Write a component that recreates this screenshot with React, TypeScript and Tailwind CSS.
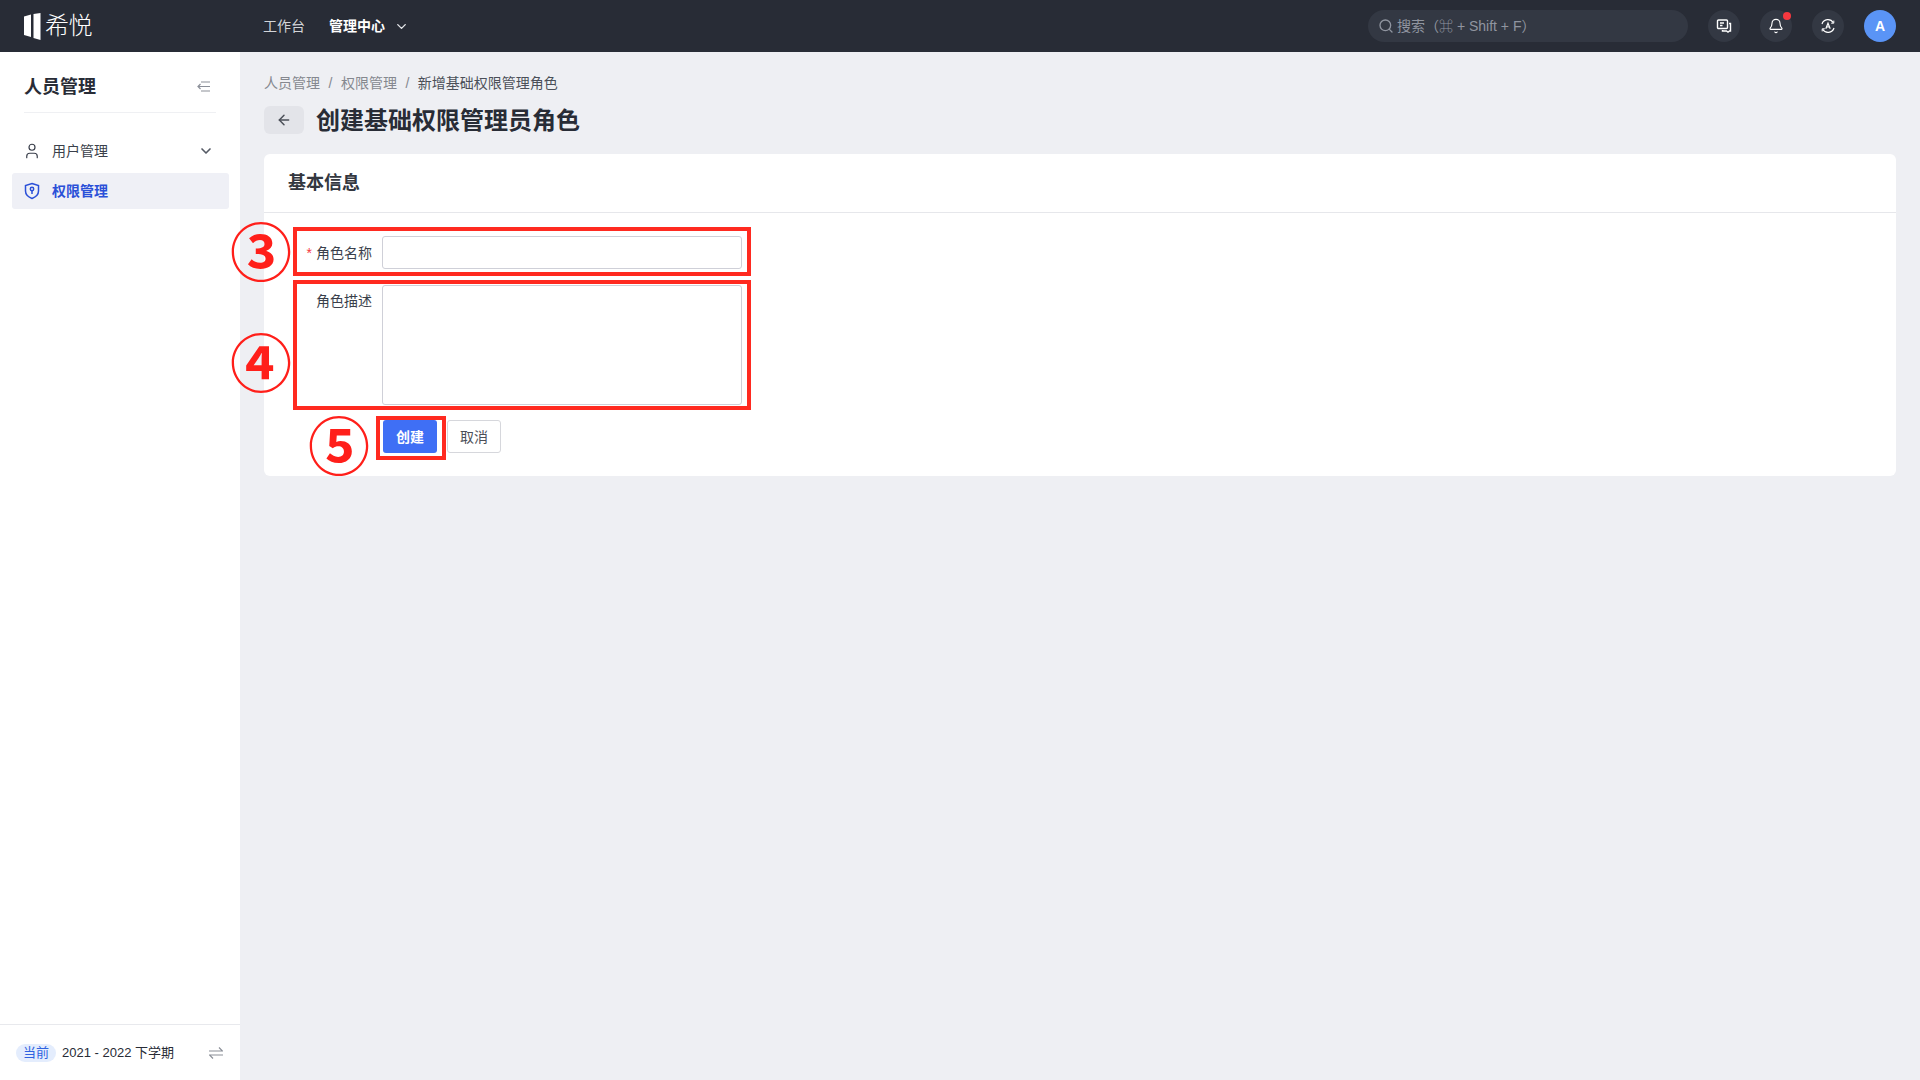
import React from "react";
import { Search, ChevronDown, ArrowLeft, Bell, User } from "lucide-react";

const font = { fontFamily: '"Liberation Sans", "Noto Sans CJK SC", sans-serif' };

function Round({ children, dot }: { children: React.ReactNode; dot?: boolean }) {
  return (
    <div className="relative flex h-8 w-8 items-center justify-center rounded-full bg-[#333843] text-white">
      {children}
      {dot && <span className="absolute right-[1px] top-[2px] h-2 w-2 rounded-full bg-[#f5383f]" />}
    </div>
  );
}

function Header() {
  return (
    <header className="flex h-[52px] shrink-0 items-center bg-[#282c36] pl-6 pr-6">
      <div className="flex w-[239px] items-center">
        <svg width="17" height="27" viewBox="0 0 17 27" fill="#fff">
          <path d="M0 3.500 7 1.500V24L0 22Z" />
          <path d="M9.500 1 16.500 0V27L9.500 25Z" />
        </svg>
        <span className="ml-[4px] text-[24px] font-light leading-none tracking-[-0.5px] text-white">希悦</span>
      </div>
      <span className="text-sm text-[#d2d4d8]">工作台</span>
      <span className="ml-6 text-sm font-semibold text-white">管理中心</span>
      <ChevronDown size={15} strokeWidth={2.2} className="ml-[9px] text-[#e5e7eb]" />
      <div className="ml-auto flex h-8 w-[320px] items-center rounded-full bg-[#333843] pl-[10px] text-sm text-[#9095a0]">
        <Search size={16} className="mr-[3px]" />
        <span>搜索（⌘ + Shift + F）</span>
      </div>
      <div className="ml-5 flex items-center gap-5">
        <Round>
          <svg width="16" height="16" viewBox="0 0 16 16" fill="none" stroke="#fff" strokeWidth="1.4">
            <rect x="1.500" y="2" width="10" height="8.500" rx="1" />
            <path d="M4 5h4M4 7.500h2.500" />
            <path d="M13 5.500h1.500v7.500h-1l-1.500 1.200-1.500-1.200H6.500v-1" />
          </svg>
        </Round>
        <Round dot>
          <Bell size={16} strokeWidth={1.7} />
        </Round>
        <Round>
          <svg width="16" height="16" viewBox="0 0 16 16" fill="none" stroke="#fff" strokeWidth="1.2">
            <path d="M2 6A6.200 6.200 0 0 1 13.300 4.800M14 10A6.200 6.200 0 0 1 2.700 11.200" />
            <path d="M13.800 2.600v2.600h-2.600M2.200 13.400v-2.600h2.600" strokeWidth="1" />
            <path d="M5.800 10.800 8 5.200l2.200 5.600M6.600 9h2.800" />
          </svg>
        </Round>
        <div className="flex h-8 w-8 items-center justify-center rounded-full bg-[#5a94f6] text-sm font-bold text-white">A</div>
      </div>
    </header>
  );
}

function Sidebar() {
  return (
    <aside className="flex w-[240px] shrink-0 flex-col bg-white">
      <div className="mx-6 flex h-[61px] items-center justify-between border-b border-[#eff0f3] pr-[6px] pt-[10px]">
        <span className="text-lg font-semibold text-[#282c36]">人员管理</span>
        <svg width="13" height="11" viewBox="0 0 13 11" fill="none" stroke="#8b8f98" strokeWidth="1.2" className="-mt-[2px]">
          <path d="M1 5.500h12M3.500 3 1 5.500 3.500 8M4 1h9M4 10h9" />
        </svg>
      </div>
      <div className="flex-1 px-3 pt-5">
        <div className="flex h-9 items-center px-3 text-sm text-[#3a3f4b]">
          <User size={18} strokeWidth={1.6} className="-ml-[1px] mr-[11px] text-[#3a3f4b]" />
          <span className="flex-1">用户管理</span>
          <ChevronDown size={16} strokeWidth={2.5} className="mr-[2px] text-[#555a65]" />
        </div>
        <div className="mt-1 flex h-9 w-[217px] items-center rounded-[3px] bg-[#eff0f6] px-3 text-sm font-semibold text-[#2b50d8]">
          <svg width="16" height="18" viewBox="0 0 16 18" fill="none" stroke="#2b50d8" strokeWidth="1.5" className="mr-[12px]">
            <path d="M8 1.500 14.500 3.500V9c0 3.600-2.800 6-6.500 7.500C4.300 15 1.500 12.600 1.500 9V3.500Z" />
            <circle cx="8" cy="7" r="1.700" />
            <path d="M8 8.700V12" />
          </svg>
          <span>权限管理</span>
        </div>
      </div>
      <div className="flex h-[56px] items-center border-t border-[#e8e9ed] pl-4 pr-[17px]">
        <span className="flex h-[18px] w-10 items-center justify-center rounded-full bg-[#e4edfd] text-[13px] text-[#2f62e0]">当前</span>
        <span className="ml-[6px] flex-1 text-[13px] text-[#282c36]">2021 - 2022 下学期</span>
        <svg width="14" height="12" viewBox="0 0 14 12" fill="none" stroke="#8b8f98" strokeWidth="1.2">
          <path d="M0 4h13.500L10 .5M14 8H.5L4 11.500" />
        </svg>
      </div>
    </aside>
  );
}

function Field({ label, required, children, top }: { label: string; required?: boolean; children: React.ReactNode; top?: boolean }) {
  return (
    <div className={`flex ${top ? "items-start" : "items-center"}`}>
      <label className={`flex w-[108px] items-center justify-end text-sm text-[#3a3f4b] ${top ? "pt-[6px]" : ""}`}>
        {required && <span className="mr-[4px] text-[#f5383f]">*</span>}
        {label}
      </label>
      <div className="ml-[10px]">{children}</div>
    </div>
  );
}

function Main() {
  return (
    <main className="relative flex-1 bg-[#eeeff3] pl-6 pr-6 pt-[21px]">
      <nav className="flex h-5 items-center text-sm text-[#85888f]">
        <span>人员管理</span>
        <span className="mx-[8.5px]">/</span>
        <span>权限管理</span>
        <span className="mx-[8.5px]">/</span>
        <span className="text-[#4b4f58]">新增基础权限管理角色</span>
      </nav>
      <div className="mt-[13px] flex h-7 items-center">
        <div className="flex h-7 w-10 items-center justify-center rounded-md bg-[#e3e4e9] text-[#4b4f58]">
          <ArrowLeft size={16} strokeWidth={2.2} />
        </div>
        <h1 className="ml-3 pt-[2px] text-2xl font-semibold text-[#282c36]">创建基础权限管理员角色</h1>
      </div>
      <section className="mt-5 h-[322px] rounded-md bg-white">
        <div className="flex h-[59px] items-center border-b border-[#e6e7eb] px-6 text-lg font-semibold text-[#33373f]">基本信息</div>
        <div className="flex flex-col pt-[23px]">
          <Field label="角色名称" required>
            <input className="block h-[33px] w-[360px] rounded-[3px] border border-[#cfd0d8] bg-white" />
          </Field>
          <div className="mt-4">
            <Field label="角色描述" top>
              <textarea className="block h-[120px] w-[360px] resize-none rounded-[3px] border border-[#cfd0d8] bg-white" />
            </Field>
          </div>
          <div className="ml-[119px] mt-[15px] flex gap-[10px]">
            <button className="h-[33px] w-[54px] rounded-[3px] bg-[#3f6ff5] text-sm font-semibold text-white">创建</button>
            <button className="h-[33px] w-[54px] rounded-[3px] border border-[#d6d7dc] bg-white text-sm text-[#4b4f58]">取消</button>
          </div>
        </div>
      </section>
    </main>
  );
}

function Marks() {
  const mark = "pointer-events-none absolute flex items-center justify-center font-bold text-[#ff1f1a] leading-none";
  return (
    <>
      <div className="absolute left-[293px] top-[227px] h-[49px] w-[458px] border-4 border-[#ff2a20]" />
      <div className="absolute left-[293px] top-[280px] h-[130px] w-[458px] border-4 border-[#ff2a20]" />
      <div className="absolute left-[376px] top-[416px] h-[44px] w-[70px] border-4 border-[#ff2a20]" />
      <span className={`${mark} left-[226px] top-[220px] h-[70px] w-[70px] text-[62px]`}>③</span>
      <span className={`${mark} left-[226px] top-[331px] h-[70px] w-[70px] text-[62px]`}>④</span>
      <span className={`${mark} left-[304px] top-[414px] h-[70px] w-[70px] text-[62px]`}>⑤</span>
    </>
  );
}

export default function App() {
  return (
    <div className="relative flex h-[1080px] w-[1920px] flex-col overflow-hidden" style={font}>
      <Header />
      <div className="flex flex-1">
        <Sidebar />
        <Main />
      </div>
      <Marks />
    </div>
  );
}
